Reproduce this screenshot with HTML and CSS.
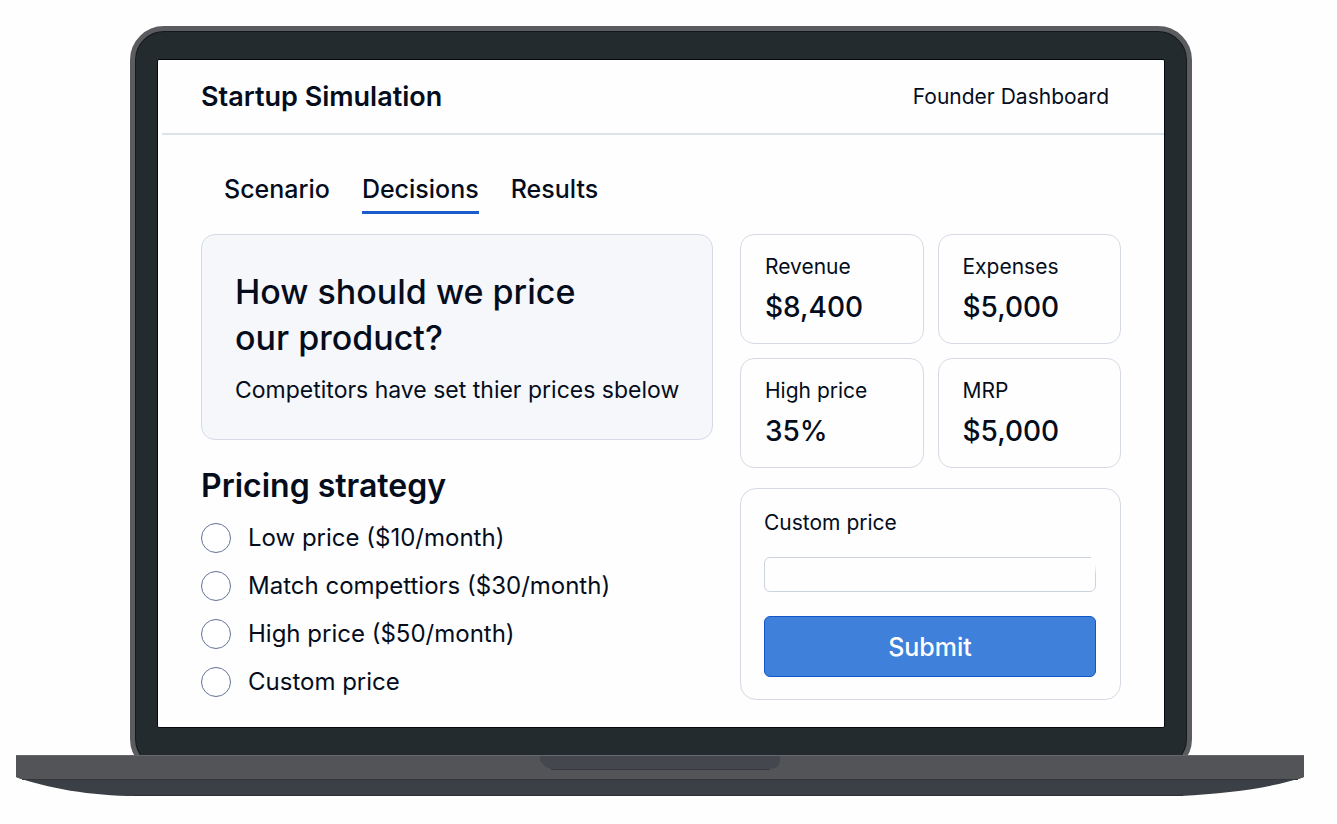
FILE: index.html
```html
<!DOCTYPE html>
<html lang="en">
<head>
<meta charset="utf-8">
<meta name="viewport" content="width=device-width, initial-scale=1">
<title>Startup Simulation</title>
<link rel="stylesheet" href="styles.css">
</head>
<body>
<div class="laptop">
  <div class="lid">
    <div class="screen">
      <header class="topbar">
        <h1 class="brand">Startup Simulation</h1>
        <span class="section-name">Founder Dashboard</span>
      </header>
      <nav class="tabs">
        <a class="tab" href="#scenario">Scenario</a>
        <a class="tab tab-active" href="#decisions" aria-current="page">Decisions</a>
        <a class="tab" href="#results">Results</a>
      </nav>
      <main class="content">
        <div class="left">
          <section class="question">
            <h2 class="question-title">How should we price<br>our product?</h2>
            <p class="question-note">Competitors have set thier prices sbelow</p>
          </section>
          <fieldset class="strategy">
            <legend class="strategy-title">Pricing strategy</legend>
            <div class="options">
              <label class="option"><input class="radio" type="radio" name="strategy" value="low">Low price ($10/month)</label>
              <label class="option"><input class="radio" type="radio" name="strategy" value="match">Match compettiors ($30/month)</label>
              <label class="option"><input class="radio" type="radio" name="strategy" value="high">High price ($50/month)</label>
              <label class="option"><input class="radio" type="radio" name="strategy" value="custom">Custom price</label>
            </div>
          </fieldset>
        </div>
        <div class="right">
          <div class="stats">
            <div class="stat"><span class="label">Revenue</span><strong class="value">$8,400</strong></div>
            <div class="stat"><span class="label">Expenses</span><strong class="value">$5,000</strong></div>
            <div class="stat"><span class="label">High price</span><strong class="value">35%</strong></div>
            <div class="stat"><span class="label">MRP</span><strong class="value">$5,000</strong></div>
          </div>
          <form class="custom">
            <label class="label" for="custom-price">Custom price</label>
            <div class="field"><input class="price-input" id="custom-price" type="text"></div>
            <button class="submit" type="button">Submit</button>
          </form>
        </div>
      </main>
    </div>
  </div>
  <svg class="base" viewBox="0 0 1288 41" preserveAspectRatio="none" aria-hidden="true">
    <path fill="#3b4047" d="M0 22C30 33 75 41 120 41H1165C1215 38 1255 33 1288 22Z"/>
    <path fill="none" stroke="#302f36" d="M118 40.500H1167"/>
    <path fill="#535458" d="M0 0H1288V22L1283 24H5L0 22Z"/>
    <path fill="none" stroke="#66676a" d="M0 .5H1288"/>
    <path fill="none" stroke="#33373d" d="M6 24.500H1282"/>
    <path fill="#44484e" d="M524 1H764V6Q763 14 754 14H535Q531 14 524 6Z"/>
    <path fill="none" stroke="#36393e" d="M535 14.500H754"/>
  </svg>
</div>
</body>
</html>
```
FILE: styles.css
```css
* {
  box-sizing: border-box;
}

body {
  margin: 0;
  background: #fefefe;
  color: #050d1c;
  font-family: Inter, "Liberation Sans", sans-serif;
}

h1,
h2,
p {
  margin: 0;
}

.laptop {
  padding: 26px 33px 28px 16px;
}

.lid {
  margin: 0 112px -18px 114px;
  padding: 28px 22px 40px;
  border: 5px solid #5b5c60;
  border-radius: 34px;
  background: #242b2f;
  box-shadow: inset 0 0 0 1px #14191d;
}

.screen {
  padding-bottom: 27px;
  border: 1px solid #05090d;
  border-radius: 2px;
  background: #fefefe;
}

.topbar {
  display: flex;
  align-items: center;
  justify-content: space-between;
  height: 75px;
  margin-left: 4px;
  padding: 0 55px 0 39px;
  border-bottom: 2px solid #dde1e8;
}

.brand {
  font-size: 27px;
  font-weight: 600;
}

.section-name {
  font-size: 21px;
}

.tabs {
  display: flex;
  gap: 32px;
  padding: 38px 66px 0;
}

.tab {
  padding-bottom: 6px;
  border-bottom: 3px solid transparent;
  color: inherit;
  font-size: 25px;
  font-weight: 500;
  line-height: 32px;
  text-decoration: none;
}

.tab-active {
  border-color: #1c5bcb;
}

.content {
  display: grid;
  grid-template-columns: 512fr 381fr;
  gap: 27px;
  padding: 20px 43px 0;
}

.question {
  padding: 34px 30px 32px 33px;
  border: 1px solid #d5dae6;
  border-radius: 14px;
  background: #f5f7fb;
}

.question-title {
  font-size: 34px;
  font-weight: 500;
  line-height: 46px;
}

.question-note {
  padding-top: 12px;
  font-size: 23px;
  line-height: 34px;
  white-space: nowrap;
}

.strategy {
  margin: 24px 0 0;
  padding: 0;
  border: 0;
}

.strategy-title {
  padding: 0;
  font-size: 32px;
  font-weight: 600;
  line-height: 44px;
}

.options {
  display: grid;
  gap: 16px;
  padding-top: 14px;
}

.option {
  display: flex;
  align-items: center;
  gap: 17px;
  font-size: 24px;
  line-height: 32px;
}

.radio {
  width: 30px;
  height: 30px;
  margin: 0;
  appearance: none;
  border: 1px solid #66739a;
  border-radius: 50%;
  background: #fff;
}

.radio:checked {
  border: 9px solid #1c5bcb;
}

.stats {
  display: grid;
  grid-template-columns: 1fr 1fr;
  gap: 14px;
}

.stat {
  display: grid;
  align-content: start;
  gap: 6px;
  height: 110px;
  padding: 18px 24px;
  border: 1px solid #d5dae6;
  border-radius: 14px;
}

.label {
  font-size: 21px;
  line-height: 28px;
}

.value {
  font-size: 28px;
  font-weight: 500;
  line-height: 40px;
}

.custom {
  display: grid;
  margin-top: 20px;
  padding: 20px 24px 22px 23px;
  border: 1px solid #d5dae6;
  border-radius: 16px;
}

.field {
  position: relative;
  display: flex;
  margin: 20px 0 24px;
}

/* Lets the field's outline fade out at its upper right corner */
.field::after {
  position: absolute;
  top: 0;
  right: 0;
  width: 5px;
  height: 18px;
  background: linear-gradient(#fefefe 40%, transparent);
  content: "";
  pointer-events: none;
}

.price-input {
  width: 100%;
  height: 35px;
  padding: 0 10px;
  border: 1px solid #cdd2df;
  border-radius: 6px;
  background: transparent;
  color: inherit;
  font: inherit;
  font-size: 21px;
}

.submit {
  height: 61px;
  border: 1px solid #1257c8;
  border-radius: 6px;
  background: #3f80db;
  color: #fff;
  font: inherit;
  font-size: 25px;
  font-weight: 500;
}

.base {
  position: relative;
  display: block;
  width: 100%;
  height: 41px;
}
```
